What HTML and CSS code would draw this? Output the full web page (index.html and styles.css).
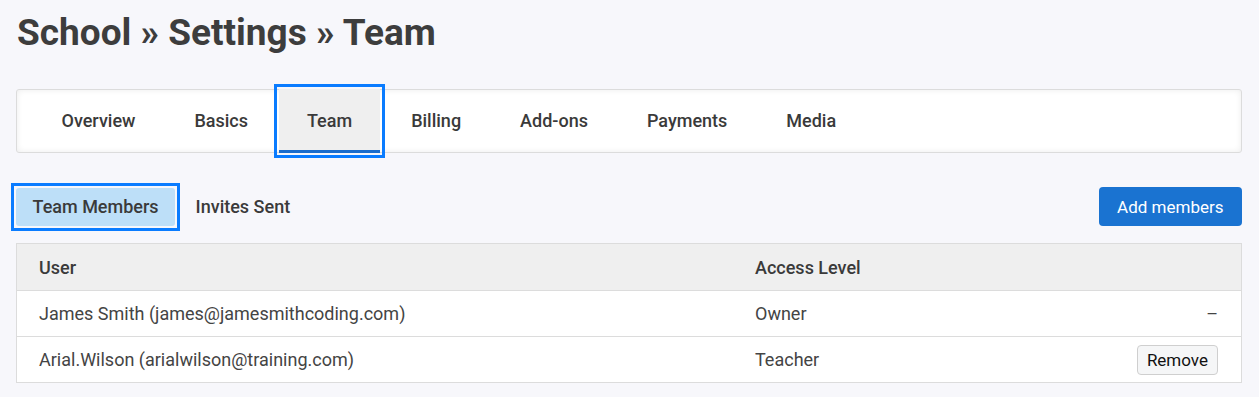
FILE: index.html
```html
<!DOCTYPE html>
<html>
<head>
<meta charset="utf-8">
<link rel="stylesheet" href="styles.css">
</head>
<body>
<div class="page">
  <h1 class="title">School » Settings » Team</h1>
  <nav class="tabs">
    <a class="tab">Overview</a>
    <a class="tab">Basics</a>
    <a class="tab active">Team</a>
    <a class="tab">Billing</a>
    <a class="tab">Add-ons</a>
    <a class="tab">Payments</a>
    <a class="tab">Media</a>
  </nav>
  <div class="toolbar">
    <div class="subtabs">
      <button class="subtab selected">Team Members</button>
      <button class="subtab">Invites Sent</button>
    </div>
    <button class="primary">Add members</button>
  </div>
  <table class="team">
    <thead>
      <tr><th class="c-user">User</th><th class="c-access">Access Level</th><th class="c-act"></th></tr>
    </thead>
    <tbody>
      <tr><td>James Smith (james@jamesmithcoding.com)</td><td>Owner</td><td class="c-act">–</td></tr>
      <tr><td>Arial.Wilson (arialwilson@training.com)</td><td>Teacher</td><td class="c-act"><button class="remove">Remove</button></td></tr>
    </tbody>
  </table>
</div>
</body>
</html>
```
FILE: styles.css
```css
html, body { margin: 0; padding: 0; }
body {
  background: #f7f7fb;
  font-family: Roboto, "Liberation Sans", sans-serif;
  color: #3a3a3a;
}
.page { padding: 10px 17px 0 16px; }
.title {
  margin: 0;
  font-size: 37px;
  font-weight: 700;
  line-height: 46px;
  color: #3d3d3d;
  padding-left: 1px;
}
.tabs {
  margin-top: 33px;
  height: 62px;
  background: #fff;
  border: 1px solid #dcdcdc;
  border-radius: 3px;
  box-shadow: inset 0 0 6px rgba(0,0,0,0.08);
  display: flex;
  align-items: stretch;
  padding: 0 15px;
}
.tab {
  display: flex;
  align-items: center;
  padding: 1px 27.5px 0;
  margin: -1px 2px;
  font-size: 18px;
  font-weight: 500;
  color: #3a3a3a;
  box-sizing: border-box;
  border-bottom: 3px solid transparent;
}
.tab.active {
  background: #efefef;
  border-bottom-color: #1b6dcc;
  outline: 3px solid #0a7cff;
  outline-offset: 2px;
}
.toolbar {
  margin-top: 34px;
  display: flex;
  justify-content: space-between;
  align-items: center;
}
.subtabs { display: flex; gap: 4px; }
.subtab {
  position: relative;
  font-family: inherit;
  font-size: 18px;
  font-weight: 500;
  color: #3a3a3a;
  background: transparent;
  border: none;
  border-radius: 3px;
  height: 38px;
  padding: 0 16.5px;
}
.subtab.selected { background: #bddff8; }
.subtab.selected::after {
  content: "";
  position: absolute;
  left: -5px; right: -5px; top: -5px; bottom: -5px;
  border: 3px solid #0a7cff;
}
.primary {
  font-family: inherit;
  font-size: 17px;
  color: #fff;
  background: #1a73d1;
  border: none;
  border-radius: 4px;
  height: 39px;
  padding: 0 18.5px;
}
.team {
  margin-top: 17px;
  width: 100%;
  border-collapse: collapse;
  background: #fff;
  border: 1px solid #dcdcdc;
}
.team th, .team td {
  text-align: left;
  font-size: 18px;
  padding: 0 23px 0 22px;
  height: 46px;
  border-bottom: 1px solid #dcdcdc;
}
.team th {
  background: #efefef;
  font-weight: 500;
  color: #3a3a3a;
}
.team td { color: #444; font-weight: 400; height: 45px; }
.team .c-user { width: 671px; }
.team .c-act { text-align: right; }
.remove {
  font-family: inherit;
  font-size: 17px;
  color: #111;
  background: #f5f6f7;
  border: 1px solid #cfcfcf;
  border-radius: 4px;
  height: 30px;
  padding: 0 9px;
}
```
